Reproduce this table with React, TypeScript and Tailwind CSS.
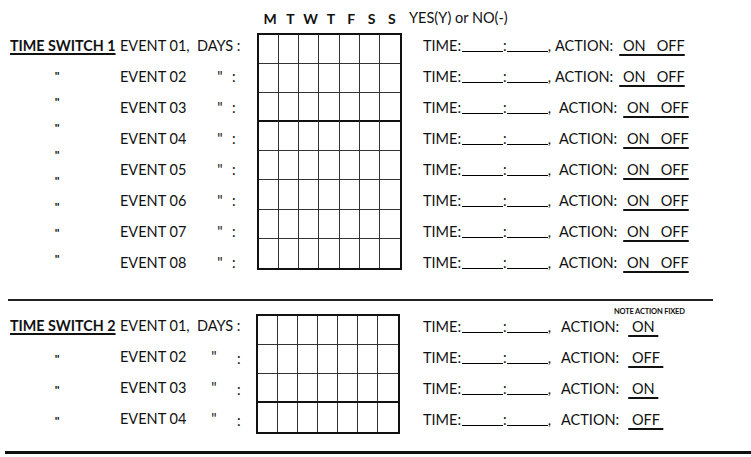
import React from "react";

const DAYS = ["M", "T", "W", "T", "F", "S", "S"];

function Blank() {
  return <span className="inline-block w-[41px] h-[1px] border-b border-black align-[-1px]" />;
}

function DayGrid({ rows, thickAfter, w, rh }: { rows: number; thickAfter: number; w: string; rh: string }) {
  return (
    <div className={`grid grid-cols-7 border-2 border-[#111] ${w}`}>
      {Array.from({ length: rows * 7 }).map((_, i) => {
        const r = Math.floor(i / 7);
        const c = i % 7;
        const last = r === rows - 1;
        const thick = r === thickAfter - 1;
        return (
          <div
            key={i}
            className={`${rh} ${c < 6 ? "border-r border-[#333]" : ""} ${
              last ? "" : thick ? "border-b-2 border-b-[#111]" : "border-b border-b-[#333]"
            }`}
          />
        );
      })}
    </div>
  );
}

function Action({ label, gap }: { label: React.ReactNode; gap: string }) {
  return (
    <div className="h-[31px] leading-[31px] whitespace-pre">
      <span className="mr-[1px]">TIME:</span>
      <Blank />
      <span>:</span>
      <Blank />
      <span className={`inline-block ${gap}`}>,</span>
      <span>ACTION:</span>
      {label}
    </div>
  );
}

export default function App() {
  const events1 = ["02", "03", "04", "05", "06", "07", "08"];
  const events2 = ["02", "03", "04"];
  const fixed = ["ON", "OFF", "ON", "OFF"];

  return (
    <div
      className="relative w-[751px] h-[457px] bg-white text-[#111] text-[14.5px] overflow-hidden"
      style={{ fontFamily: "Lato, 'Noto Sans', sans-serif" }}
    >
      {/* header */}
      <div className="h-[30px] pt-[6px] flex items-center">
        <div className="ml-[257px] w-[145px] grid grid-cols-7 font-bold text-[14px] pl-[3px]">
          {DAYS.map((d, i) => (
            <span key={i} className="text-center">
              {d}
            </span>
          ))}
        </div>
        <span className="ml-[7px]">YES(Y) or NO(-)</span>
      </div>

      {/* time switch 1 */}
      <div className="flex">
        <div className="w-[120px] flex flex-col">
          <div className="h-[31px] flex items-center pl-[10px] font-bold text-[14.3px] underline decoration-2 underline-offset-2 whitespace-nowrap">
            TIME SWITCH 1
          </div>
          <div className="mt-[2px] flex flex-col">
            {Array.from({ length: 8 }).map((_, i) => (
              <div key={i} className="h-[26.2px] w-[114px] flex items-center justify-center text-[12px] font-bold">
                "
              </div>
            ))}
          </div>
        </div>
        <div className="w-[137px] flex flex-col">
          <div className="h-[31px] flex items-center whitespace-pre">
            <span>EVENT 01,  DAYS :</span>
          </div>
          {events1.map((e) => (
            <div key={e} className="h-[31px] flex items-center">
              <span className="w-[95px]">EVENT {e}</span>
              <span className="w-[10px] text-center">"</span>
              <span className="ml-[7px]">:</span>
            </div>
          ))}
        </div>
        <div className="mt-[3px]">
          <DayGrid rows={8} thickAfter={3} w="w-[145px]" rh="h-[29.1px]" />
        </div>
        <div className="pl-[21px] flex flex-col">
          {Array.from({ length: 8 }).map((_, i) => (
            <Action
              key={i}
              gap={i < 2 ? "mr-[4px]" : "mr-[8px]"}
              label={
                <span className="ml-[6px] underline decoration-2 underline-offset-[3px]">{" ON   OFF"}</span>
              }
            />
          ))}
        </div>
      </div>

      {/* divider */}
      <div className="mt-[21px] ml-[8px] w-[705px] h-[2px] bg-[#222]" />

      {/* time switch 2 */}
      <div className="relative flex pt-[9.5px]">
        <span className="absolute left-[614px] top-[5px] text-[7.5px] font-bold tracking-tight">
          NOTE ACTION FIXED
        </span>
        <div className="w-[120px] flex flex-col">
          <div className="h-[31px] flex items-center pl-[10px] font-bold text-[14.3px] underline decoration-2 underline-offset-2 whitespace-nowrap">
            TIME SWITCH 2
          </div>
          {events2.map((e) => (
            <div key={e} className="h-[31px] w-[114px] flex items-center justify-center pt-[4px] text-[12px] font-bold">
              "
            </div>
          ))}
        </div>
        <div className="w-[136px] flex flex-col">
          <div className="h-[31px] flex items-center whitespace-pre">
            <span>EVENT 01,  DAYS :</span>
          </div>
          {events2.map((e) => (
            <div key={e} className="h-[31px] flex items-center">
              <span className="w-[89px]">EVENT {e}</span>
              <span className="w-[10px] text-center">"</span>
              <span className="ml-[18px] pt-[4px]">:</span>
            </div>
          ))}
        </div>
        <div className="mt-[3.5px]">
          <DayGrid rows={4} thickAfter={3} w="w-[144px]" rh="h-[29.1px]" />
        </div>
        <div className="pl-[23px] flex flex-col">
          {fixed.map((a, i) => (
            <Action
              key={i}
              gap="mr-[10px]"
              label={
                <span className="ml-[9px] underline decoration-2 underline-offset-[3px]">{` ${a} `}</span>
              }
            />
          ))}
        </div>
      </div>

      {/* bottom rule */}
      <div className="mt-[16px] ml-[5px] w-[746px] h-[3px] bg-[#111]" />
    </div>
  );
}
